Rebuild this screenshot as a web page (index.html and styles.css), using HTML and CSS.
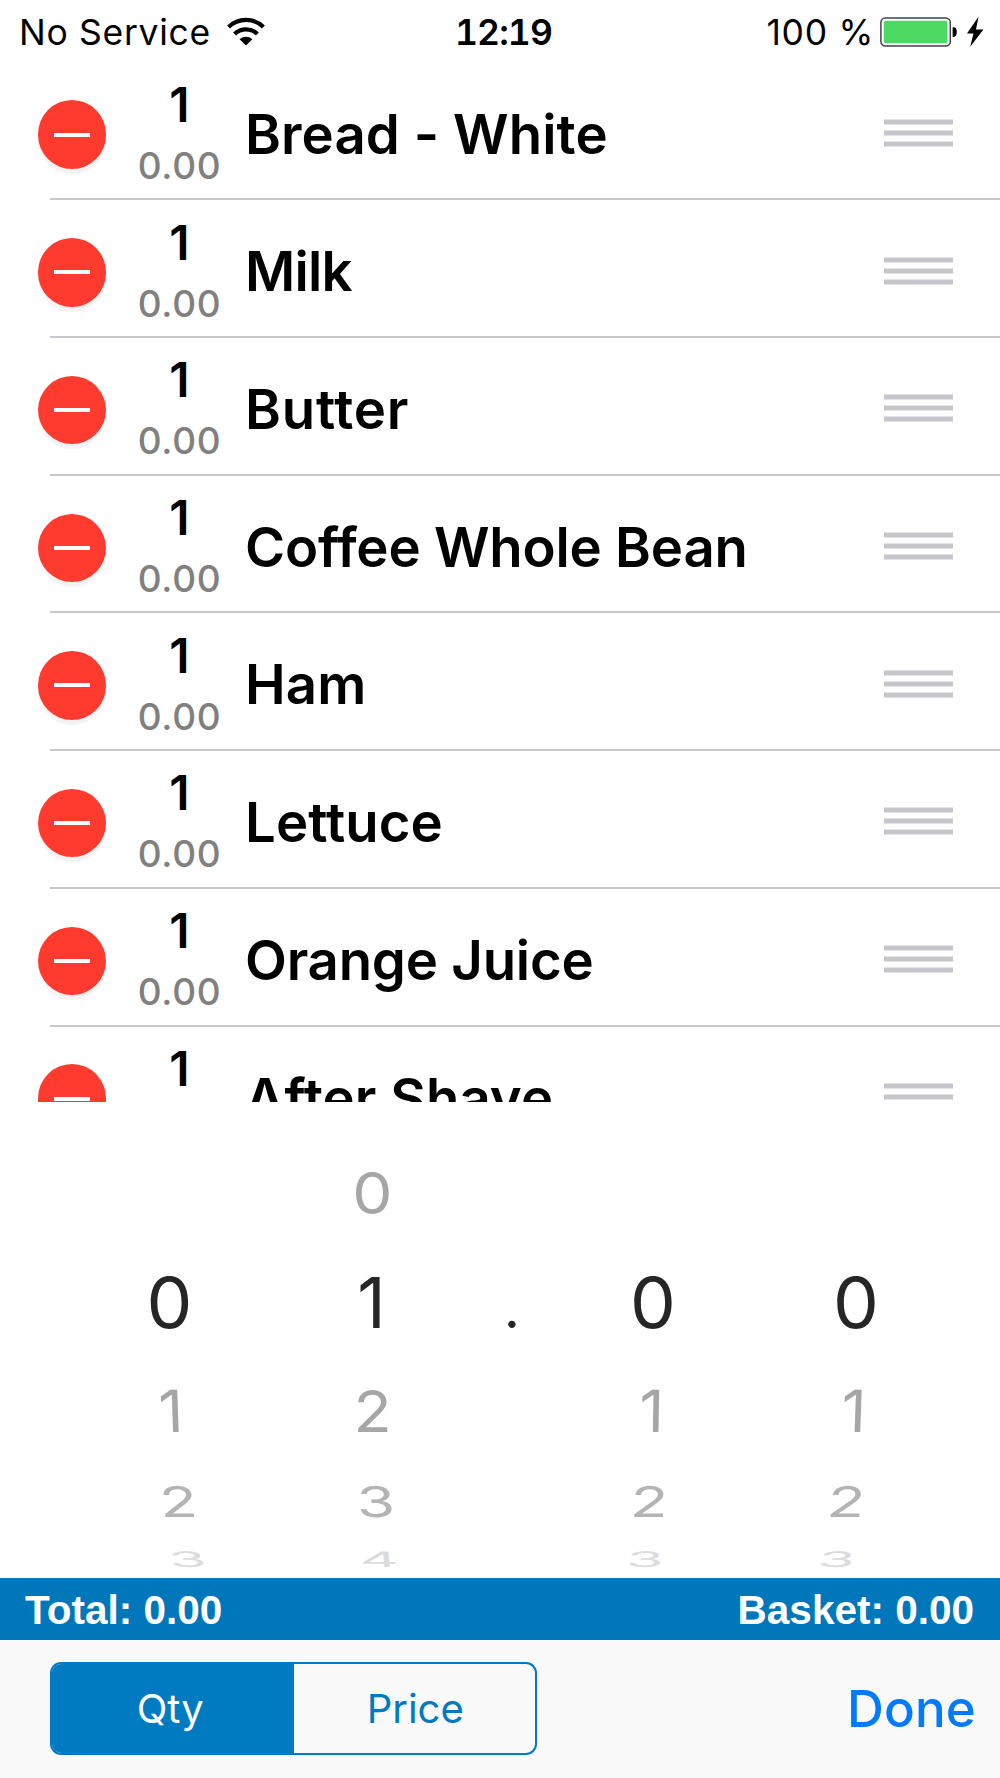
FILE: index.html
```html
<!DOCTYPE html>
<html lang="en">
<head>
<meta charset="utf-8">
<title>Shopping List</title>
<link rel="stylesheet" href="styles.css">
</head>
<body>
<svg class="defs" width="0" height="0" aria-hidden="true">
  <symbol id="handle" viewBox="0 0 69 28">
    <path fill="#c5c5cb" d="M0 .5h69v5H0zM0 11.5h69v5H0zM0 22.5h69v5H0z"/>
  </symbol>
</svg>
<div class="screen">
  <header class="status">
    <div class="carrier">
      <span>No Service</span>
      <svg class="wifi" width="40" height="30" viewBox="0 0 40 30">
        <path d="M2.6 10A24.8 24.8 0 0 1 37.4 10" fill="none" stroke="#000" stroke-width="4.2"/>
        <path d="M8.6 16.9A16.4 16.4 0 0 1 31.4 16.9" fill="none" stroke="#000" stroke-width="4.2"/>
        <path d="M13.6 22.2A9.6 9.6 0 0 1 26.4 22.2L20 28.6z"/>
      </svg>
    </div>
    <div class="clock">12:19</div>
    <div class="power">
      <span>100 %</span>
      <svg class="battery" width="104" height="32" viewBox="0 0 104 32">
        <rect x=".9" y="1.9" width="69.4" height="28.2" rx="4.5" fill="#fff" stroke="#45404a" stroke-width="1.5"/>
        <rect x="3.8" y="4.8" width="63.6" height="22.4" rx="2" fill="#4cd964"/>
        <path d="M72.6 11.3h1.2q3 0 3 4.8t-3 4.8h-1.2z"/>
        <path d="M98.6.4L87 17.4h6.5L90.2 30.8L103.4 13.6H96z"/>
      </svg>
    </div>
  </header>

  <ul class="list">
    <li class="row"><i class="delete"></i><div class="amount"><b>1</b><span>0.00</span></div><div class="name">Bread - White</div><svg class="handle"><use href="#handle"/></svg></li>
    <li class="row"><i class="delete"></i><div class="amount"><b>1</b><span>0.00</span></div><div class="name tight">Milk</div><svg class="handle"><use href="#handle"/></svg></li>
    <li class="row"><i class="delete"></i><div class="amount"><b>1</b><span>0.00</span></div><div class="name loose">Butter</div><svg class="handle"><use href="#handle"/></svg></li>
    <li class="row"><i class="delete"></i><div class="amount"><b>1</b><span>0.00</span></div><div class="name snug">Coffee Whole Bean</div><svg class="handle"><use href="#handle"/></svg></li>
    <li class="row"><i class="delete"></i><div class="amount"><b>1</b><span>0.00</span></div><div class="name">Ham</div><svg class="handle"><use href="#handle"/></svg></li>
    <li class="row"><i class="delete"></i><div class="amount"><b>1</b><span>0.00</span></div><div class="name">Lettuce</div><svg class="handle"><use href="#handle"/></svg></li>
    <li class="row"><i class="delete"></i><div class="amount"><b>1</b><span>0.00</span></div><div class="name snug">Orange Juice</div><svg class="handle"><use href="#handle"/></svg></li>
    <li class="row"><i class="delete"></i><div class="amount"><b>1</b></div><div class="name">After Shave</div><svg class="handle"><use href="#handle"/></svg></li>
  </ul>

  <div class="picker">
    <div class="wheel tens"><span></span><span>0</span><span>1</span><span>2</span><span>3</span></div>
    <div class="wheel ones"><span>0</span><span>1</span><span>2</span><span>3</span><span>4</span></div>
    <div class="wheel point"><span></span><span>.</span></div>
    <div class="wheel tenths"><span></span><span>0</span><span>1</span><span>2</span><span>3</span></div>
    <div class="wheel hundredths"><span></span><span>0</span><span>1</span><span>2</span><span>3</span></div>
  </div>

  <div class="totals"><span>Total: 0.00</span><span>Basket: 0.00</span></div>

  <footer class="toolbar">
    <div class="segmented"><span class="segment selected">Qty</span><span class="segment">Price</span></div>
    <span class="done">Done</span>
  </footer>
</div>
</body>
</html>
```
FILE: styles.css
```css
* { box-sizing: border-box; }
body { margin: 0; background: #fff; color: #000; font-family: Inter, sans-serif; }
.defs { display: block; }
.screen { display: flex; flex-direction: column; width: 1000px; height: 1778px; overflow: hidden; }

.status {
  display: grid;
  grid-template-columns: 1fr auto 1fr;
  align-items: center;
  height: 62px;
  padding: 2px 16px 0 19px;
  font-size: 35.5px;
  white-space: pre;
}
.carrier { display: flex; align-items: center; gap: 15.5px; letter-spacing: .7px; }
.clock { padding-left: 4px; font-weight: 600; font-variant-numeric: tabular-nums; letter-spacing: -.9px; }
.power { display: flex; align-items: center; justify-content: flex-end; gap: 6px; letter-spacing: .7px; }

.list { height: 1039.7px; margin: 0; padding: .7px 0 0; overflow: hidden; list-style: none; }
.row {
  display: grid;
  grid-template-columns: 68px 102px 1fr 69px;
  height: 137.7px;
  padding: 0 47px 0 37.5px;
  background: linear-gradient(#c8c7cc, #c8c7cc) 50px 100% / 950px 2px no-repeat;
}
.delete {
  align-self: start;
  display: grid;
  place-items: center;
  width: 68.5px;
  height: 68.5px;
  margin-top: 37.8px;
  border-radius: 50%;
  background: #ff3b30;
  box-shadow: 0 5px 2px rgba(0, 0, 0, .05);
}
.delete::before { content: ""; width: 36px; height: 4px; background: #fff; }
.amount { display: flex; flex-direction: column; align-items: center; margin-right: -13px; padding: 12.3px 0 0 33px; }
.amount b { font-size: 48px; font-weight: 600; line-height: 60px; }
.amount span { font-size: 37px; font-weight: 500; line-height: 62px; letter-spacing: .6px; color: #808080; }
.name { padding: 5px 0 0 37.5px; font-size: 54.5px; font-weight: 600; line-height: 133px; letter-spacing: .1px; white-space: nowrap; }
.name.tight { letter-spacing: -.8px; }
.name.snug { letter-spacing: -.2px; }
.name.loose { letter-spacing: .8px; }
.handle { width: 69px; height: 28px; margin-top: 56.3px; }

.picker {
  display: grid;
  grid-template-columns: 204px 201px 78px 205px 201px;
  height: 476.3px;
  padding: 36px 0 0 68px;
  overflow: hidden;
  color: #a6a6a6;
}
.wheel { display: grid; grid-template-rows: 110px 110px 106px 76px 38px; justify-items: center; font-size: 58px; }
.wheel span { display: flex; align-items: center; line-height: 1; }
.wheel span:nth-child(1) { transform: scaleX(1.1); }
.wheel span:nth-child(2) { font-size: 70px; color: #262626; }
.wheel span:nth-child(4) { color: #b4b4b4; }
.wheel span:nth-child(5) { color: #dcdcdc; }

.tens span:nth-child(2) { transform: translateX(-.5px) scaleX(1.04); }
.tens span:nth-child(3) { transform: translateX(1px) skewX(2deg) scaleX(1.05); }
.tens span:nth-child(4) { transform: translateX(8.7px) skewX(5deg) scale(1.07, .73); }
.tens span:nth-child(5) { transform: translateX(17.5px) skewX(12deg) scale(1.05, .37); }
.ones span:nth-child(2) { transform: translateX(-1px); }
.ones span:nth-child(3) { transform: scaleX(1.08); }
.ones span:nth-child(4) { transform: translateX(3px) skewX(2deg) scale(1.07, .73); }
.ones span:nth-child(5) { transform: translateX(6px) skewX(6deg) scale(1.05, .37); }
.point span:nth-child(2) { font-weight: 300; }
.tenths span:nth-child(2), .hundredths span:nth-child(2) { transform: scaleX(1.04); }
.tenths span:nth-child(3) { transform: translateX(-2px) skewX(-1deg) scaleX(1.05); }
.tenths span:nth-child(4) { transform: translateX(-4.5px) skewX(-3deg) scale(1.07, .73); }
.tenths span:nth-child(5) { transform: translateX(-9px) skewX(-5deg) scale(1.05, .37); }
.hundredths span:nth-child(3) { transform: translateX(-3px) skewX(-2deg) scaleX(1.05); }
.hundredths span:nth-child(4) { transform: translateX(-10.5px) skewX(-6deg) scale(1.07, .73); }
.hundredths span:nth-child(5) { transform: translateX(-20.5px) skewX(-12deg) scale(1.05, .37); }

.totals {
  display: flex;
  justify-content: space-between;
  height: 62px;
  padding: 1px 26px 0 25px;
  background: #0077bb;
  color: #fff;
  font: bold 40.5px/62px "Liberation Sans", sans-serif;
}

.toolbar {
  display: flex;
  align-items: center;
  justify-content: space-between;
  height: 138px;
  padding: 0 24px 0 50px;
  background: #f9f9f9;
}
.segmented {
  display: grid;
  grid-template-columns: 1fr 1fr;
  width: 487px;
  height: 93px;
  border: 2.5px solid #007ac1;
  border-radius: 11px;
  overflow: hidden;
  font-size: 40px;
  line-height: 89px;
  text-align: center;
  color: #007ac1;
}
.segment { padding-left: 2px; }
.selected { padding: 0 5px 0 0; background: #007ac1; color: #fff; }
.done { font-size: 51px; font-weight: 540; letter-spacing: .2px; color: #007aff; }
```
